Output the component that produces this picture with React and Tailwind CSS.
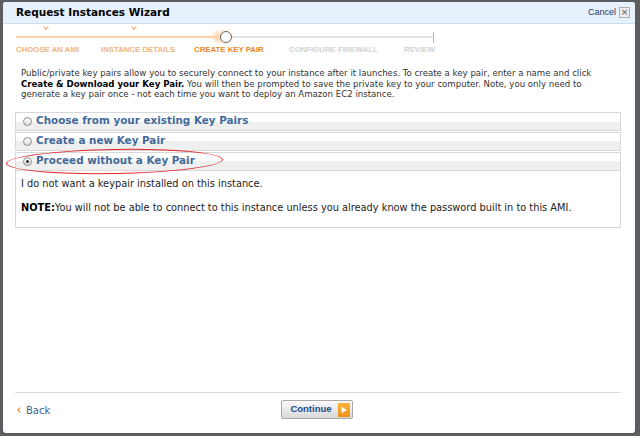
import { useState } from "react";

const steps = [
  { label: "CHOOSE AN AMI", done: true, w: "w-[85px]" },
  { label: "INSTANCE DETAILS", done: true, w: "w-[93px]" },
  { label: "CREATE KEY PAIR", current: true, w: "w-[95px]" },
  { label: "CONFIGURE FIREWALL", w: "w-[115px]" },
  { label: "REVIEW", w: "w-[40px]" },
];

const options = [
  "Choose from your existing Key Pairs",
  "Create a new Key Pair",
  "Proceed without a Key Pair",
];

function Radio({ checked }) {
  return (
    <span className="w-[9px] h-[9px] rounded-full border border-[#8a8a8a] bg-gradient-to-b from-white to-[#dcdcdc] flex items-center justify-center shrink-0">
      {checked && <span className="w-[3px] h-[3px] rounded-full bg-[#333]" />}
    </span>
  );
}

function Check({ left }) {
  return (
    <svg className={`absolute ${left} top-[-5px]`} width="6" height="4" viewBox="0 0 6 4">
      <path d="M0.5 0.5 L3 3.2 L5.5 0.5" fill="none" stroke="#f0a760" strokeWidth="1.1" />
    </svg>
  );
}

export default function App() {
  const [selected, setSelected] = useState(2);

  return (
    <div
      className="w-[640px] h-[436px] bg-[#5b5d60] pt-[2px] pl-[3px] pr-[5px] pb-[3px] overflow-hidden"
      style={{ fontFamily: '"DejaVu Sans", Verdana, sans-serif' }}
    >
      <div className="h-full bg-white rounded-[3px] flex flex-col overflow-hidden">
        {/* header */}
        <div className="h-[22px] bg-[#e7f1fb] border-b border-[#c9def2] flex items-center justify-between pl-[13px] pr-[5px] shrink-0">
          <span className="text-[10.5px] font-bold text-black">Request Instances Wizard</span>
          <div className="flex items-center gap-[3px]">
            <span
              className="text-[9px] text-[#1d3a6e]"
              style={{ fontFamily: '"Liberation Sans", Arial, sans-serif' }}
            >
              Cancel
            </span>
            <span className="w-[11px] h-[11px] border border-[#b0b0b0] bg-[#ececec] text-[9px] leading-none text-[#555] flex items-center justify-center">
              ×
            </span>
          </div>
        </div>

        {/* stepper */}
        <div className="pl-[13px] mt-[7px] shrink-0">
          <div className="w-[418px] h-[12px] flex items-center relative">
            <div className="w-[205px] h-[2px] bg-[#f6d3ad]" />
            <div className="flex-1 h-[2px] bg-[#e3e3e3]" />
            <div className="w-[1px] h-[11px] bg-[#b5b5b5]" />
            <Check left="left-[27px]" />
            <Check left="left-[115px]" />
            <span className="absolute left-[197px] top-[1px] w-[18px] h-[10px] rounded-full bg-[#fbd7ae] blur-[2px]" />
            <span className="absolute left-[204px] top-[0px] w-[12px] h-[12px] rounded-full border-[1.5px] border-[#666] bg-white" />
          </div>
          <div
            className="flex mt-[2px] text-[7.8px] leading-[9px] font-bold"
            style={{ fontFamily: '"Liberation Sans", Arial, sans-serif' }}
          >
            {steps.map((s) => (
              <span
                key={s.label}
                className={`${s.w} ${s.current ? "text-[#e8862a]" : s.done ? "text-[#f2b57a]" : "text-[#d2d2d2]"}`}
              >
                {s.label}
              </span>
            ))}
          </div>
        </div>

        {/* description */}
        <p className="mt-[14px] ml-[18px] text-[8.6px] leading-[10.5px] text-[#333] whitespace-nowrap shrink-0">
          Public/private key pairs allow you to securely connect to your instance after it launches. To create a key pair, enter a name and click
          <br />
          <b className="text-black">Create &amp; Download your Key Pair.</b> You will then be prompted to save the private key to your computer. Note, you only need to
          <br />
          generate a key pair once - not each time you want to deploy an Amazon EC2 instance.
        </p>

        {/* accordion */}
        <div className="mt-[12px] ml-[12px] mr-[14px] flex flex-col gap-[1px] shrink-0">
          {options.map((o, i) => (
            <div key={o}>
              <button
                onClick={() => setSelected(i)}
                className="w-full h-[19px] border border-[#d8d8d8] bg-gradient-to-b from-white from-50% to-[#efefef] to-50% flex items-center gap-[4px] pl-[7px] relative"
              >
                <Radio checked={selected === i} />
                <span className="text-[10.4px] font-bold text-[#41699a]">{o}</span>
                {selected === i && i === 2 && (
                  <span className="absolute left-[-10px] top-[-4px] w-[217px] h-[25px] rounded-[50%] border border-[#e0262c] -rotate-[1deg]" />
                )}
              </button>
              {selected === i && (
                <div className="border border-t-0 border-[#d8d8d8] h-[57px] pl-[5px] pt-[7px] text-[9.8px] leading-[12px] text-[#222]">
                  <p>I do not want a keypair installed on this instance.</p>
                  <p className="mt-[12px]">
                    <b className="text-black">NOTE:</b>You will not be able to connect to this instance unless you already know the password built in to this AMI.
                  </p>
                </div>
              )}
            </div>
          ))}
        </div>

        <div className="flex-1" />

        {/* footer */}
        <div className="ml-[12px] mr-[14px] border-t border-[#dcdcdc] h-[35px] flex items-center relative shrink-0">
          <svg className="ml-[2px] mr-[5px]" width="4" height="6" viewBox="0 0 4 6">
            <path d="M3.3 0.6 L0.8 3 L3.3 5.4" fill="none" stroke="#e8862a" strokeWidth="1.2" />
          </svg>
          <span className="text-[10px] text-[#3d6494]">Back</span>
          <button className="absolute left-[266px] top-[7px] w-[72px] h-[19px] border border-[#a8a8a8] rounded-[2px] bg-gradient-to-b from-[#fafafa] to-[#d8d8d8] flex items-center">
            <span
              className="flex-1 text-center text-[9.5px] font-bold text-[#1f4a8c] pl-[2px]"
              style={{ fontFamily: '"Liberation Sans", Arial, sans-serif' }}
            >
              Continue
            </span>
            <span className="w-[12px] h-[14px] mr-[2px] bg-gradient-to-b from-[#fbb33c] to-[#f08f12] flex items-center justify-center">
              <svg width="6" height="8" viewBox="0 0 6 8">
                <path d="M0.5 0.5 L5.5 4 L0.5 7.5 Z" fill="#fff" />
              </svg>
            </span>
          </button>
        </div>
        <div className="h-[6px] shrink-0" />
      </div>
    </div>
  );
}
